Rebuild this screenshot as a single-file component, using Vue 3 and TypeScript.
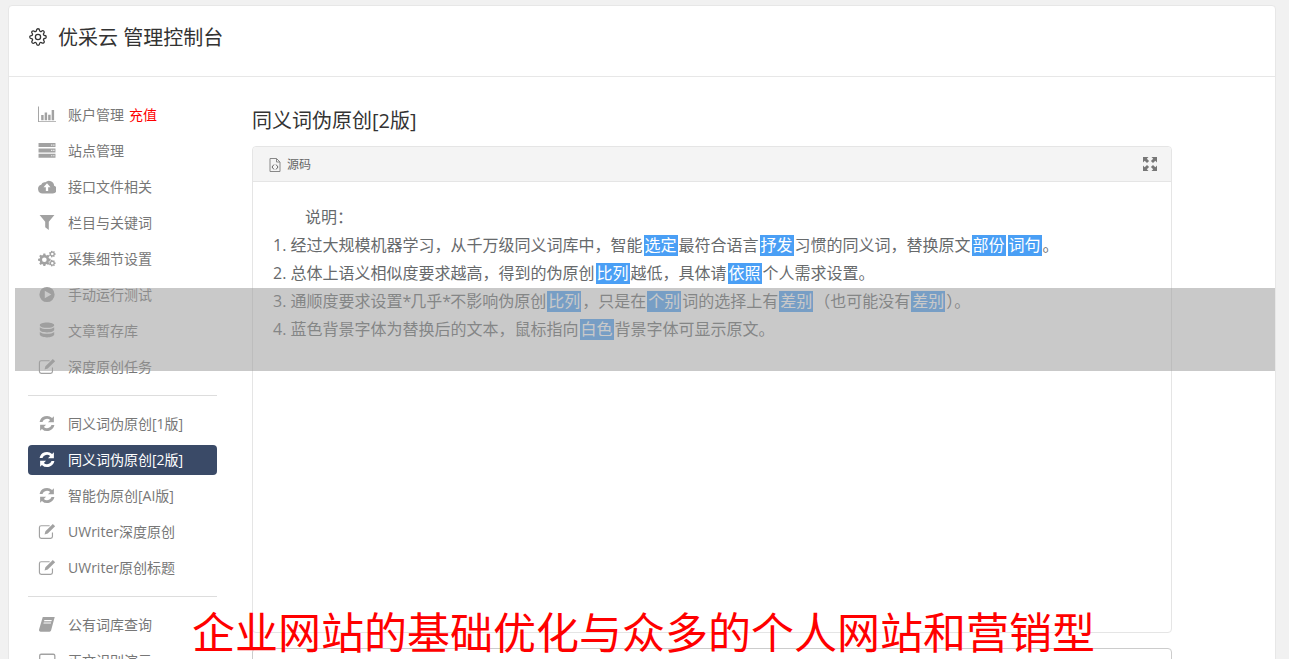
<script setup lang="ts">
interface NavItem {
  label: string
  icon: string
  badge?: string
  active?: boolean
}

// builds a cog outline with a round hole, used for the small settings icon
const gear = (cx: number, cy: number, r: number, hole: number, teeth: number) => {
  const pts: string[] = []
  const step = (Math.PI * 2) / teeth
  for (let i = 0; i < teeth; i++) {
    const a = i * step
    const add = (rad: number, off: number) => {
      pts.push(`${(cx + Math.cos(a + off) * rad).toFixed(2)} ${(cy + Math.sin(a + off) * rad).toFixed(2)}`)
    }
    add(r * 0.76, -step * 0.34)
    add(r, -step * 0.2)
    add(r, step * 0.2)
    add(r * 0.76, step * 0.34)
  }
  return `M${pts.join('L')}Z M${cx - hole} ${cy}a${hole} ${hole} 0 1 0 ${hole * 2} 0a${hole} ${hole} 0 1 0 ${-hole * 2} 0Z`
}

const icons: Record<string, string> = {
  chart: 'M0 .5h.9v13.800H17v.9H0zM3 8.500h2.300V13.500H3zM6.300 6.200h2.300v7.300H6.300zM9.600 8.200h2.300v5.300H9.600zM12.900 3.800h2.300v9.700h-2.300z',
  server: 'M.5 1h16v3.800H.5zM12.500 2.400v1h1v-1zM14.500 2.400v1h1v-1zM.5 6h16v3.800H.5zM12.500 7.400v1h1v-1zM14.500 7.400v1h1v-1zM.5 11h16v3.800H.5zM12.500 12.400v1h1v-1zM14.500 12.400v1h1v-1z',
  cloud: 'M4.300 14.500a4.200 4.200 0 0 1-1.300-8.200A3.400 3.400 0 0 1 7 4 4.800 4.800 0 0 1 15.200 7.300 3.700 3.700 0 0 1 14 14.500zM8.500 5 5.200 8.800h2.200v3.400h2.200V8.800h2.200z',
  filter: 'M1.500 1h14L10.200 7.200v8l-3.400-2.800V7.200z',
  cogs: `${gear(6, 9.200, 6, 2.200, 8)} ${gear(13.500, 3.800, 3.200, 1.200, 7)} ${gear(13.500, 12.400, 3.200, 1.200, 7)}`,
  play: 'M8.500 .8a7.200 7.200 0 1 0 0 14.400A7.200 7.200 0 0 0 8.500 .8zM6.400 4.400 12.600 8l-6.200 3.600z',
  database: 'M8.500 .5c3.800 0 6.800 1.100 6.800 2.500S12.300 5.500 8.500 5.500 1.700 4.400 1.700 3 4.700 .5 8.500 .5zM1.700 5c1.300 1.200 4 1.700 6.800 1.700S14 6.200 15.300 5v2.400c0 1.400-3 2.500-6.800 2.500S1.700 8.800 1.700 7.400zM1.700 9.300c1.300 1.200 4 1.700 6.800 1.700s5.500-.5 6.800-1.700v2.500c0 1.500-3 2.700-6.800 2.700s-6.800-1.200-6.800-2.700z',
  edit: 'M3 2h8v1.100H3A1.100 1.100 0 0 0 1.900 4.200v8.600A1.100 1.100 0 0 0 3 13.900h9a1.100 1.100 0 0 0 1.100-1.100V9h1.100v3.800A2.200 2.200 0 0 1 12 15H3a2.200 2.200 0 0 1-2.200-2.200V4.200A2.200 2.200 0 0 1 3 2zM14 .8l2.200 2.200-7 7-3 .8.800-3z',
  refresh: 'M15 1.200v5.600H9.400l2.100-2.100A4.500 4.500 0 0 0 4.200 6.500H1.500A7 7 0 0 1 13.300 2.900zM2 14.800V9.200h5.600l-2.100 2.100a4.500 4.500 0 0 0 7.300-1.800h2.700A7 7 0 0 1 3.700 13.100z',
  book: 'M4.500 1H15.800l-.4 1.300-3 11.200c-.2.800-.8 1.300-1.500 1.300H2.600C1.400 14.800.7 14 1 12.800zM6 3.800l-.3 1.100h7l.3-1.100zM5.400 6l-.3 1.100h7l.3-1.100z',
  square: 'M3 1.500h11.500a2 2 0 0 1 2 2v9.500a2 2 0 0 1-2 2H3a2 2 0 0 1-2-2V3.500a2 2 0 0 1 2-2zM3 2.700a.8.8 0 0 0-.8.8v9.500c0 .4.400.8.800.8h11.500c.4 0 .8-.4.8-.8V3.500a.8.8 0 0 0-.8-.8z',
}

const groups: NavItem[][] = [
  [
    { label: '账户管理', icon: 'chart', badge: '充值' },
    { label: '站点管理', icon: 'server' },
    { label: '接口文件相关', icon: 'cloud' },
    { label: '栏目与关键词', icon: 'filter' },
    { label: '采集细节设置', icon: 'cogs' },
    { label: '手动运行测试', icon: 'play' },
    { label: '文章暂存库', icon: 'database' },
    { label: '深度原创任务', icon: 'edit' },
  ],
  [
    { label: '同义词伪原创[1版]', icon: 'refresh' },
    { label: '同义词伪原创[2版]', icon: 'refresh', active: true },
    { label: '智能伪原创[AI版]', icon: 'refresh' },
    { label: 'UWriter深度原创', icon: 'edit' },
    { label: 'UWriter原创标题', icon: 'edit' },
  ],
  [
    { label: '公有词库查询', icon: 'book' },
    { label: '正文识别演示', icon: 'square' },
  ],
]

// {…} marks a replaced word
const lines = [
  '1. 经过大规模机器学习，从千万级同义词库中，智能{选定}最符合语言{抒发}习惯的同义词，替换原文{部份}{词句}。',
  '2. 总体上语义相似度要求越高，得到的伪原创{比列}越低，具体请{依照}个人需求设置。',
  '3. 通顺度要求设置*几乎*不影响伪原创{比列}，只是在{个别}词的选择上有{差别}（也可能没有{差别}）。',
  '4. 蓝色背景字体为替换后的文本，鼠标指向{白色}背景字体可显示原文。',
]

const parts = (line: string) =>
  line.split(/(\{[^}]*\}|\*)/).filter(Boolean).map((s) => ({
    text: s.replace(/[{}]/g, ''),
    kind: s.startsWith('{') ? 'mark' : s === '*' ? 'star' : '',
  }))
</script>

<template>
  <div class="page">
    <div class="card">
      <header class="top">
        <svg class="top-gear" viewBox="0 0 24 24" fill="none" stroke="#333" stroke-width="1.700">
          <circle cx="12" cy="12" r="3.500" />
          <path d="M19.400 15a1.650 1.650 0 0 0 .33 1.820l.06.06a2 2 0 0 1 0 2.830 2 2 0 0 1-2.830 0l-.06-.06a1.650 1.650 0 0 0-1.820-.33 1.650 1.650 0 0 0-1 1.510V21a2 2 0 0 1-2 2 2 2 0 0 1-2-2v-.09A1.650 1.650 0 0 0 9 19.400a1.650 1.650 0 0 0-1.820.33l-.06.06a2 2 0 0 1-2.830 0 2 2 0 0 1 0-2.830l.06-.06a1.650 1.650 0 0 0 .33-1.820 1.650 1.650 0 0 0-1.510-1H3a2 2 0 0 1-2-2 2 2 0 0 1 2-2h.09A1.650 1.650 0 0 0 4.600 9a1.650 1.650 0 0 0-.33-1.820l-.06-.06a2 2 0 0 1 0-2.830 2 2 0 0 1 2.830 0l.06.06a1.650 1.650 0 0 0 1.820.33H9a1.650 1.650 0 0 0 1-1.510V3a2 2 0 0 1 2-2 2 2 0 0 1 2 2v.09a1.650 1.650 0 0 0 1 1.510 1.650 1.650 0 0 0 1.820-.33l.06-.06a2 2 0 0 1 2.830 0 2 2 0 0 1 0 2.830l-.06.06a1.650 1.650 0 0 0-.33 1.820V9a1.650 1.650 0 0 0 1.510 1H21a2 2 0 0 1 2 2 2 2 0 0 1-2 2h-.09a1.650 1.650 0 0 0-1.510 1z" />
        </svg>
        <h1>优采云 管理控制台</h1>
      </header>

      <div class="content">
        <nav class="side">
          <div v-for="(group, g) in groups" :key="g" class="group">
            <a v-for="item in group" :key="item.label" class="nav" :class="{ active: item.active }">
              <svg class="nav-icon" viewBox="0 0 17 16">
                <path :d="icons[item.icon]" fill-rule="evenodd" />
              </svg>
              <span>{{ item.label }}</span>
              <span v-if="item.badge" class="badge">{{ item.badge }}</span>
            </a>
          </div>
        </nav>

        <main class="main">
          <h2>同义词伪原创[2版]</h2>
          <section class="panel">
            <div class="panel-head">
              <svg class="file" viewBox="0 0 12 16" fill="none" stroke="#888" stroke-width="1">
                <path d="M1 1.500h6.500l3.500 3.500v9.500H1zM7.500 1.500V5H11" />
                <path d="M5 7.500 3 10l2 2.500M7 7.500 9 10l-2 2.500" stroke="#666" />
              </svg>
              <span>源码</span>
              <svg class="expand" viewBox="0 0 14 14" fill="#777">
                <path d="M0 0h5.500L3.800 1.700l2.300 2.300-2.100 2.100-2.300-2.300L0 5.500zM14 0v5.500l-1.700-1.700L10 6.100 7.900 4l2.300-2.300L8.500 0zM0 14V8.500l1.700 1.700L4 7.900 6.100 10l-2.300 2.300L5.500 14zM14 14H8.500l1.700-1.700L7.900 10 10 7.900l2.300 2.300L14 8.500z" />
              </svg>
            </div>
            <div class="panel-body">
              <p class="intro">说明：</p>
              <p v-for="line in lines" :key="line">
                <template v-for="(part, i) in parts(line)" :key="i">
                  <span v-if="part.kind" :class="part.kind">{{ part.text }}</span>
                  <template v-else>{{ part.text }}</template>
                </template>
              </p>
            </div>
          </section>
          <section class="panel next"></section>
        </main>
      </div>
    </div>

    <div class="veil"></div>
    <div class="promo">企业网站的基础优化与众多的个人网站和营销型</div>
  </div>
</template>

<style>
html,
body {
  margin: 0;
  overflow: hidden;
  background: #f1f1f1;
}
</style>

<style scoped>
.page {
  position: relative;
  height: 659px;
  overflow: hidden;
  padding: 5px 13px 0 8px;
  box-sizing: border-box;
  font-family: "Open Sans", "Noto Sans CJK SC", sans-serif;
  color: #676a6c;
}

.card {
  background: #fff;
  border: 1px solid #e7e7e7;
  border-radius: 4px;
  height: 800px;
}

.top {
  display: flex;
  align-items: center;
  gap: 11px;
  height: 64px;
  padding: 0 0 6px 20px;
  border-bottom: 1px solid #e7e7e7;
}

.top-gear {
  width: 18px;
  height: 18px;
  margin-top: -2px;
}

h1 {
  margin: 0;
  font-size: 20px;
  font-weight: 400;
  line-height: 28px;
  color: #333;
}

.content {
  display: flex;
}

.side {
  width: 189px;
  margin-left: 19px;
  padding-top: 23px;
  flex: none;
}

.group {
  display: flex;
  flex-direction: column;
  gap: 6px;
  padding-bottom: 13px;
  margin-bottom: 13px;
  border-bottom: 1px solid #ddd;
}

.group:last-child {
  border-bottom: 0;
}

.nav {
  display: flex;
  align-items: center;
  height: 30px;
  box-sizing: border-box;
  padding: 0 0 2px 10px;
  border-radius: 4px;
  font-size: 14px;
  color: #777;
}

.nav-icon {
  width: 18px;
  height: 17px;
  margin-right: 12px;
  fill: #a2a2a2;
  flex: none;
}

.nav.active {
  background: #3a4a67;
  color: #fff;
}

.nav.active .nav-icon {
  fill: #fff;
}

.badge {
  margin-left: 5px;
  color: #f00;
}

.main {
  width: 920px;
  margin-left: 35px;
  padding-top: 29px;
}

h2 {
  margin: 0 0 10px;
  font-size: 20px;
  font-weight: 400;
  line-height: 30px;
  color: #333;
}

.panel {
  height: 487px;
  box-sizing: border-box;
  border: 1px solid #e5e5e5;
  border-radius: 4px;
}

.panel.next {
  margin-top: 15px;
  border-color: #ccc;
}

.panel-head {
  display: flex;
  align-items: center;
  height: 34px;
  padding: 0 14px 0 16px;
  background: #f4f4f4;
  border-bottom: 1px solid #e5e5e5;
  border-radius: 4px 4px 0 0;
  font-size: 12px;
  color: #666;
}

.file {
  width: 12px;
  height: 16px;
  margin-right: 6px;
  margin-top: 2px;
}

.expand {
  width: 14px;
  height: 14px;
  margin-left: auto;
}

.panel-body {
  padding: 21px 20px;
  font-size: 16px;
  line-height: 28px;
}

.panel-body p {
  margin: 0;
}

.intro {
  text-indent: 32px;
}

.mark {
  display: inline-block;
  height: 21px;
  line-height: 21px;
  padding: 0 1px;
  margin: 0 1px;
  background: #4a9ff5;
  color: #fff;
}

.star {
  margin-right: -1px;
}

.veil {
  position: absolute;
  left: 15px;
  top: 288px;
  width: 1260px;
  height: 83px;
  background: rgba(157, 157, 157, 0.55);
}

.promo {
  position: absolute;
  left: 192px;
  top: 599px;
  font-family: "Noto Sans CJK SC", sans-serif;
  font-size: 43px;
  line-height: 62px;
  color: #f00;
  white-space: nowrap;
}
</style>
